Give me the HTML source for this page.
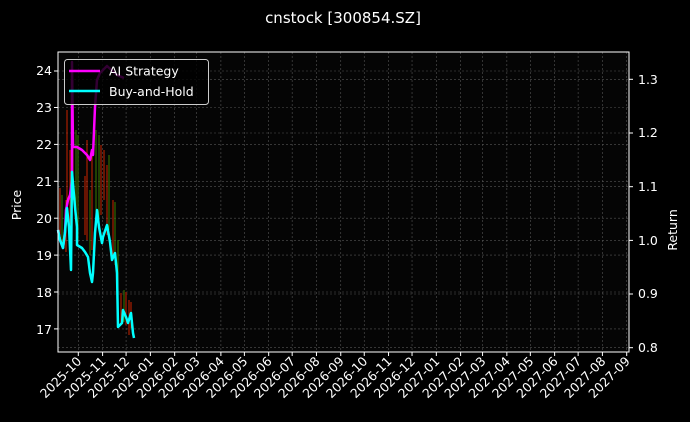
<!DOCTYPE html>
<html><head><meta charset="utf-8"><style>
html,body{margin:0;padding:0;background:#000;}
svg{display:block;font-family:"DejaVu Sans","Liberation Sans",sans-serif;}
</style></head><body>
<svg id="s" width="690" height="422" viewBox="0 0 690 422" xmlns="http://www.w3.org/2000/svg">
<rect width="690" height="422" fill="#000"/>
<rect x="58" y="52" width="571" height="300" fill="#050505"/>
<g id="grid" stroke="#555" stroke-width="0.6" stroke-dasharray="2,2"></g>
<g id="candles" stroke-width="1">
<line x1="60" y1="188" x2="60" y2="240" stroke="#cc2200"/>
<line x1="62" y1="195" x2="62" y2="245" stroke="#3a7a00"/>
<line x1="66" y1="200" x2="66" y2="252" stroke="#cc2200"/>
<line x1="67" y1="110" x2="67" y2="215" stroke="#cc2200"/>
<line x1="70" y1="150" x2="70" y2="230" stroke="#cc2200"/>
<line x1="73" y1="80" x2="73" y2="200" stroke="#cc2200"/>
<line x1="76" y1="130" x2="76" y2="225" stroke="#3a7a00"/>
<line x1="78" y1="135" x2="78" y2="240" stroke="#3a7a00"/>
<line x1="85" y1="176" x2="85" y2="235" stroke="#cc2200"/>
<line x1="87" y1="140" x2="87" y2="240" stroke="#cc2200"/>
<line x1="90" y1="190" x2="90" y2="255" stroke="#3a7a00"/>
<line x1="92" y1="150" x2="92" y2="250" stroke="#cc2200"/>
<line x1="96" y1="130" x2="96" y2="220" stroke="#3a7a00"/>
<line x1="99" y1="135" x2="99" y2="220" stroke="#3a7a00"/>
<line x1="101" y1="145" x2="101" y2="215" stroke="#cc2200"/>
<line x1="104" y1="150" x2="104" y2="200" stroke="#cc2200"/>
<line x1="107" y1="165" x2="107" y2="235" stroke="#cc2200"/>
<line x1="109" y1="155" x2="109" y2="230" stroke="#3a7a00"/>
<line x1="113" y1="200" x2="113" y2="260" stroke="#cc2200"/>
<line x1="115" y1="202" x2="115" y2="265" stroke="#3a7a00"/>
<line x1="118" y1="240" x2="118" y2="310" stroke="#3a7a00"/>
<line x1="121" y1="293" x2="121" y2="325" stroke="#cc2200"/>
<line x1="124" y1="290" x2="124" y2="322" stroke="#3a7a00"/>
<line x1="126" y1="292" x2="126" y2="325" stroke="#cc2200"/>
<line x1="129" y1="300" x2="129" y2="335" stroke="#cc2200"/>
<line x1="131" y1="302" x2="131" y2="328" stroke="#cc2200"/>
</g>
<polyline fill="none" stroke="#ff00ff" stroke-width="2.5" stroke-linejoin="round" points="58,230 60,240 63,248 65,232 66,210 68,200 70,195 72,180 72,62 73,147 77,147 82,150 87,155 90,160 92,150 93,155 95,107 97,80 100,73 107,66 117,75 124,78"/>
<polyline fill="none" stroke="#00ffff" stroke-width="2.5" stroke-linejoin="round" points="58,230 60,240 63,248 65,232 67,208 69,227 71,270 72,172 75,207 77,227 77,245 82,248 85,252 88,257 90,273 92,282 93,273 95,233 97,210 99,227 102,243 103,237 107,225 110,242 112,260 115,253 117,273 118,327 122,323 123,310 126,317 128,323 131,313 133,333 134,338"/>
<rect x="58" y="52" width="571" height="300" fill="none" stroke="#fff" stroke-width="1"/>
<g id="ticks" stroke="#fff" stroke-width="1"></g>
<g id="labels" fill="#fff" font-size="12.5"></g>
<g fill="#fff" font-size="12.5">
<text x="52" y="75" text-anchor="end">24</text>
<text x="52" y="112" text-anchor="end">23</text>
<text x="52" y="149" text-anchor="end">22</text>
<text x="52" y="186" text-anchor="end">21</text>
<text x="52" y="223" text-anchor="end">20</text>
<text x="52" y="260" text-anchor="end">19</text>
<text x="52" y="297" text-anchor="end">18</text>
<text x="52" y="334" text-anchor="end">17</text>
<text x="638" y="84">1.3</text>
<text x="638" y="137">1.2</text>
<text x="638" y="191">1.1</text>
<text x="638" y="245">1.0</text>
<text x="638" y="298">0.9</text>
<text x="638" y="352">0.8</text>
<text transform="translate(21,205) rotate(-90)" text-anchor="middle">Price</text>
<text transform="translate(677,230) rotate(-90)" text-anchor="middle">Return</text>
</g>
<text x="343" y="23" fill="#fff" font-size="15" text-anchor="middle">cnstock [300854.SZ]</text>
<rect x="64.5" y="59.5" width="144" height="45" rx="3" fill="#000" fill-opacity="0.8" stroke="#ccc" stroke-width="1"/>
<line x1="69" y1="71" x2="100" y2="71" stroke="#ff00ff" stroke-width="2.5"/>
<line x1="69" y1="91" x2="100" y2="91" stroke="#00ffff" stroke-width="2.5"/>
<text x="109" y="75.5" fill="#fff" font-size="12.5">AI Strategy</text>
<text x="109" y="96" fill="#fff" font-size="12.5">Buy-and-Hold</text>
<script>
var g=document.getElementById('grid'),t=document.getElementById('ticks'),l=document.getElementById('labels');
var NS='http://www.w3.org/2000/svg';
function el(p,n,a,txt){var e=document.createElementNS(NS,n);for(var k in a)e.setAttribute(k,a[k]);if(txt)e.textContent=txt;p.appendChild(e);return e;}
var days=[0,31,61,92,123,151,182,212,243,273,304,335,365,396,426,457,488,516,547,577,608,638,669,700];
var names=['2025-10','2025-11','2025-12','2026-01','2026-02','2026-03','2026-04','2026-05','2026-06','2026-07','2026-08','2026-09','2026-10','2026-11','2026-12','2027-01','2027-02','2027-03','2027-04','2027-05','2027-06','2027-07','2027-08','2027-09'];
var sc=(626.7-78.3)/700;
days.forEach(function(d,i){var x=78.3+d*sc;
el(g,'line',{x1:x,y1:52,x2:x,y2:352});
el(t,'line',{x1:x,y1:352,x2:x,y2:356});
el(l,'text',{transform:'translate('+(x+4)+',362) rotate(-45)','text-anchor':'end'},names[i]);});
[71,107.5,144.4,181.3,218.2,255.1,292,328.9].forEach(function(y){el(g,'line',{x1:58,y1:y,x2:629,y2:y});el(t,'line',{x1:54,y1:y,x2:58,y2:y});});
[79.3,133,186.7,240.4,294,347.7].forEach(function(y){el(g,'line',{x1:58,y1:y,x2:629,y2:y});el(t,'line',{x1:629,y1:y,x2:633,y2:y});});
</script>
</svg>
</body></html>
